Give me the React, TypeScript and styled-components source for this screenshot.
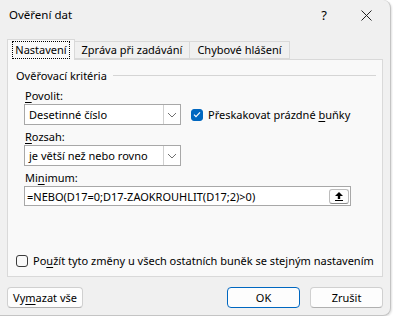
import styled, { createGlobalStyle } from "styled-components";

const GlobalStyle = createGlobalStyle`
  html, body {
    margin: 0;
    padding: 0;
    background: #ffffff;
  }
  body {
    font-family: "Noto Sans", "Open Sans", Arial, sans-serif;
    font-size: 11px;
    color: #000;
  }
`;

const Dialog = styled.div`
  width: 391px;
  height: 316px;
  box-sizing: border-box;
  background: #f0f0f0;
  border: 1px solid #c4c4c4;
  border-left: none;
  border-top: none;
  border-radius: 0 8px 8px 0;
  box-shadow: 1px 1px 2px rgba(0, 0, 0, 0.12);
  display: flex;
  flex-direction: column;
  overflow: hidden;
`;

const TitleBar = styled.div`
  height: 38px;
  display: flex;
  align-items: flex-start;
  padding: 6px 0 0 9px;
  box-sizing: border-box;
`;

const Title = styled.div`
  flex: 1;
  font-size: 11.5px;
  line-height: 18px;
`;

const TitleButton = styled.div<{ $w: number }>`
  width: ${(p) => p.$w}px;
  height: 18px;
  display: flex;
  align-items: center;
  justify-content: center;
  font-size: 13px;
`;

const TabRow = styled.div`
  height: 21px;
  display: flex;
  align-items: flex-end;
  padding-left: 7px;
`;

const Tab = styled.div<{ $active?: boolean; $w: number }>`
  width: ${(p) => p.$w}px;
  height: ${(p) => (p.$active ? 21 : 18)}px;
  box-sizing: border-box;
  border: 1px solid #d9d9d9;
  border-bottom: ${(p) => (p.$active ? "none" : "1px solid #d9d9d9")};
  border-left: ${(p) => (p.$active ? "1px solid #d9d9d9" : "none")};
  background: ${(p) => (p.$active ? "#f9f9f9" : "#f0f0f0")};
  display: flex;
  align-items: center;
  justify-content: center;
  position: relative;
  z-index: ${(p) => (p.$active ? 1 : 0)};
  margin-bottom: ${(p) => (p.$active ? "-1px" : "0")};
  line-height: 16px;
  white-space: nowrap;
`;

const Focus = styled.span`
  border: 1px dotted #000;
  padding: 0 2px;
`;

const Panel = styled.div`
  margin: 0 7px 0 7px;
  height: 218px;
  box-sizing: border-box;
  background: #f9f9f9;
  border: 1px solid #d9d9d9;
  display: flex;
  flex-direction: column;
  padding: 6px 6px 0 8px;
`;

const GroupHead = styled.div`
  display: flex;
  align-items: center;
  gap: 6px;
  height: 18px;
`;

const GroupLine = styled.div`
  flex: 1;
  height: 1px;
  background: #d5d5d5;
`;

const Body = styled.div`
  padding-left: 8px;
  display: flex;
  flex-direction: column;
`;

const Label = styled.div`
  height: 17px;
  line-height: 17px;
  margin-top: 3px;
  padding-left: 1px;
`;

const Row = styled.div`
  display: flex;
  align-items: center;
  gap: 10px;
`;

const Select = styled.div`
  width: 157px;
  height: 21px;
  box-sizing: border-box;
  background: #fff;
  border: 1px solid #a8a8a8;
  display: flex;
  align-items: center;
`;

const SelectText = styled.div`
  flex: 1;
  padding-left: 4px;
  white-space: nowrap;
`;

const SelectArrow = styled.div`
  width: 16px;
  height: 100%;
  border-left: 1px solid #d0d0d0;
  display: flex;
  align-items: center;
  justify-content: center;
`;

const Check = styled.div<{ $on?: boolean }>`
  flex: none;
  width: 12px;
  height: 12px;
  box-sizing: border-box;
  border-radius: 3px;
  border: 1px solid ${(p) => (p.$on ? "#0067c0" : "#3b3b3b")};
  background: ${(p) => (p.$on ? "#0067c0" : "#f9f9f9")};
  display: flex;
  align-items: center;
  justify-content: center;
`;

const CheckLabel = styled.label`
  display: flex;
  align-items: center;
  gap: 5px;
  white-space: nowrap;
`;

const Input = styled.div`
  width: 327px;
  height: 20px;
  box-sizing: border-box;
  background: #fff;
  border: 1px solid #a8a8a8;
  display: flex;
  align-items: center;
  padding: 0 1px 0 2px;
  font-size: 11px;
`;

const InputText = styled.div`
  flex: 1;
  white-space: nowrap;
`;

const RefButton = styled.div`
  width: 20px;
  height: 15px;
  box-sizing: border-box;
  border: 1px solid #bcbcbc;
  border-bottom-color: #8a8a8a;
  border-radius: 3px;
  background: #fdfdfd;
  display: flex;
  align-items: center;
  justify-content: center;
`;

const Spacer = styled.div`
  flex: 1;
`;

const BottomCheck = styled.div`
  padding: 0 0 8px 0;
`;

const Footer = styled.div`
  display: flex;
  align-items: center;
  padding: 10px 7px 0 7px;
  gap: 10px;
`;

const Button = styled.div<{ $primary?: boolean; $w: number }>`
  width: ${(p) => p.$w}px;
  height: 21px;
  box-sizing: border-box;
  border-radius: 4px;
  border: 1px solid ${(p) => (p.$primary ? "#0067c0" : "#d0d0d0")};
  border-bottom-color: ${(p) => (p.$primary ? "#0067c0" : "#b0b0b0")};
  background: #fdfdfd;
  display: flex;
  align-items: center;
  justify-content: center;
  line-height: 16px;
`;

const U = styled.span`
  text-decoration: underline;
  text-underline-offset: 2px;
`;

function Chevron() {
  return (
    <svg width="10" height="6" viewBox="0 0 10 6">
      <path d="M1 1 L5 5 L9 1" fill="none" stroke="#707070" strokeWidth="1" />
    </svg>
  );
}

function Tick() {
  return (
    <svg width="8" height="7" viewBox="0 0 8 7">
      <path d="M1 3.6 L3 5.6 L7 1.4" fill="none" stroke="#fff" strokeWidth="1.2" />
    </svg>
  );
}

function UpIcon() {
  return (
    <svg width="10" height="10" viewBox="0 0 10 10">
      <path d="M5 1 L9 5 H6.2 V8 H3.8 V5 H1 Z" fill="#000" />
      <rect x="1" y="9" width="8" height="1" fill="#000" />
    </svg>
  );
}

export default function App() {
  return (
    <>
      <GlobalStyle />
      <Dialog>
        <TitleBar>
          <Title>Ověření dat</Title>
          <TitleButton $w={24}>?</TitleButton>
          <TitleButton $w={20} style={{ marginLeft: 20, marginRight: 14 }}>
            <svg width="11" height="11" viewBox="0 0 11 11">
              <path d="M0.5 0.5 L10.5 10.5 M10.5 0.5 L0.5 10.5" stroke="#222" strokeWidth="1" />
            </svg>
          </TitleButton>
        </TitleBar>

        <TabRow>
          <Tab $active $w={68}>
            <Focus>Nastavení</Focus>
          </Tab>
          <Tab $w={115}>Zpráva při zadávání</Tab>
          <Tab $w={100}>Chybové hlášení</Tab>
        </TabRow>

        <Panel>
          <GroupHead>
            <span>Ověřovací kritéria</span>
            <GroupLine />
          </GroupHead>
          <Body>
            <Label>
              <U>P</U>ovolit:
            </Label>
            <Row>
              <Select>
                <SelectText>Desetinné číslo</SelectText>
                <SelectArrow>
                  <Chevron />
                </SelectArrow>
              </Select>
              <CheckLabel>
                <Check $on>
                  <Tick />
                </Check>
                <span>
                  Přeskakovat prázdné <U>b</U>uňky
                </span>
              </CheckLabel>
            </Row>
            <Label>
              <U>R</U>ozsah:
            </Label>
            <Row>
              <Select>
                <SelectText>je větší než nebo rovno</SelectText>
                <SelectArrow>
                  <Chevron />
                </SelectArrow>
              </Select>
            </Row>
            <Label>
              Mi<U>n</U>imum:
            </Label>
            <Input>
              <InputText>=NEBO(D17=0;D17-ZAOKROUHLIT(D17;2)&gt;0)</InputText>
              <RefButton>
                <UpIcon />
              </RefButton>
            </Input>
          </Body>
          <Spacer />
          <BottomCheck>
            <CheckLabel>
              <Check />
              <span>
                Po<U>u</U>žít tyto změny u všech ostatních buněk se stejným nastavením
              </span>
            </CheckLabel>
          </BottomCheck>
        </Panel>

        <Footer>
          <Button $w={76}>
            <span>
              Vy<U>m</U>azat vše
            </span>
          </Button>
          <Spacer />
          <Button $primary $w={73}>
            OK
          </Button>
          <Button $w={73}>Zrušit</Button>
        </Footer>
      </Dialog>
    </>
  );
}
